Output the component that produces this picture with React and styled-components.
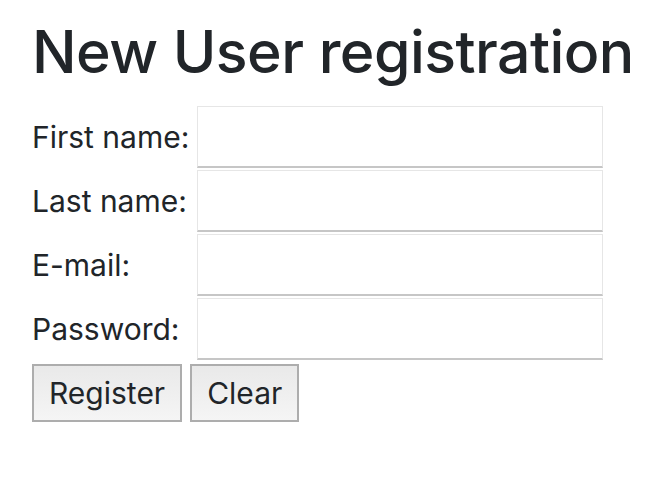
import React from 'react';
import styled, { createGlobalStyle } from 'styled-components';

const GlobalStyle = createGlobalStyle`
  body {
    margin: 0;
    background: #ffffff;
    color: #212529;
    font-family: Inter, "Liberation Sans", sans-serif;
  }
`;

const Page = styled.div`
  padding: 17px 0 0 32px;
`;

const Title = styled.h1`
  margin: 0 0 18px 0;
  font-size: 59px;
  font-weight: 500;
  line-height: 1.2;
  letter-spacing: -0.55px;
  white-space: nowrap;
  color: #212529;
`;

const Form = styled.form`
  display: grid;
  grid-template-columns: max-content 406px;
  justify-content: start;
  column-gap: 8px;
  row-gap: 2px;
  align-items: center;
`;

const Label = styled.label`
  font-size: 30px;
  color: #212529;
  white-space: nowrap;
`;

const Input = styled.input`
  box-sizing: border-box;
  width: 406px;
  height: 62px;
  margin: 0;
  border: 1px solid #e6e6e6;
  border-bottom: 2px solid #c6c6c6;
  background: #fff;
  font-size: 30px;
  padding: 0 8px;
  outline: none;
`;

const Buttons = styled.div`
  display: flex;
  gap: 8px;
  margin-top: 4px;
`;

const Button = styled.button`
  box-sizing: border-box;
  height: 58px;
  padding: 0 15px;
  border: 2px solid #adadad;
  background: linear-gradient(#e9e9e9, #f5f5f5);
  font-family: Inter, "Liberation Sans", sans-serif;
  font-size: 30px;
  color: #212529;
  border-radius: 0;
`;

const fields = [
  { id: 'first', label: 'First name:', type: 'text' },
  { id: 'last', label: 'Last name:', type: 'text' },
  { id: 'email', label: 'E-mail:', type: 'email' },
  { id: 'password', label: 'Password:', type: 'password' },
];

const App = () => (
  <>
    <GlobalStyle />
    <Page>
      <Title>New User registration</Title>
      <Form onSubmit={(e) => e.preventDefault()}>
        {fields.map((f) => (
          <React.Fragment key={f.id}>
            <Label htmlFor={f.id}>{f.label}</Label>
            <Input id={f.id} type={f.type} />
          </React.Fragment>
        ))}
      </Form>
      <Buttons>
        <Button type="submit">Register</Button>
        <Button type="reset">Clear</Button>
      </Buttons>
    </Page>
  </>
);

export default App;
